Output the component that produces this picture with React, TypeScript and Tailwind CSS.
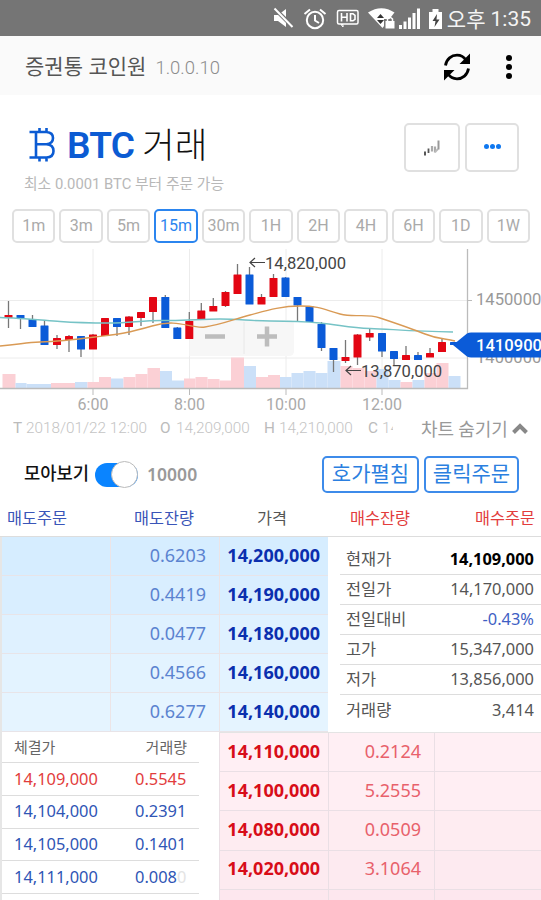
import { useState } from 'react';

const TIMEFRAMES = ['1m', '3m', '5m', '15m', '30m', '1H', '2H', '4H', '6H', '1D', '1W'] as const;

const ASKS = [
  { qty: '0.6203', price: '14,200,000', bg: 'bg-[#d6edff]' },
  { qty: '0.4419', price: '14,190,000', bg: 'bg-[#d9eeff]' },
  { qty: '0.0477', price: '14,180,000', bg: 'bg-[#dff1ff]' },
  { qty: '0.4566', price: '14,160,000', bg: 'bg-[#e3f3ff]' },
  { qty: '0.6277', price: '14,140,000', bg: 'bg-[#e5f4ff]' },
];

const BIDS = [
  { qty: '0.2124', price: '14,110,000', bg: 'bg-[#ffeff4]' },
  { qty: '5.2555', price: '14,100,000', bg: 'bg-[#ffeef3]' },
  { qty: '0.0509', price: '14,080,000', bg: 'bg-[#feecf1]' },
  { qty: '3.1064', price: '14,020,000', bg: 'bg-[#fdeaf0]' },
  { qty: '', price: '', bg: 'bg-[#fde7ee]' },
];

const SUMMARY = [
  { label: '현재가', value: '14,109,000', cls: 'font-bold text-black' },
  { label: '전일가', value: '14,170,000', cls: 'text-[#555]' },
  { label: '전일대비', value: '-0.43%', cls: 'text-[#3f5fc4]' },
  { label: '고가', value: '15,347,000', cls: 'text-[#555]' },
  { label: '저가', value: '13,856,000', cls: 'text-[#555]' },
  { label: '거래량', value: '3,414', cls: 'text-[#555]' },
];

const TRADES = [
  { price: '14,109,000', qty: '0.5545', rest: '', cls: 'text-[#e23c3c]' },
  { price: '14,104,000', qty: '0.2391', rest: '', cls: 'text-[#2f55b5]' },
  { price: '14,105,000', qty: '0.1401', rest: '', cls: 'text-[#2f55b5]' },
  { price: '14,111,000', qty: '0.008', rest: '0', cls: 'text-[#2f55b5]' },
];

// [x, body top, body bottom, wick top, wick bottom, up]
const CANDLES: [number, number, number, number, number, boolean][] = [
  [8.5, 67, 70, 53, 80, true],
  [20.5, 67, 71, 67, 81, false],
  [32.5, 71, 79, 67, 79, false],
  [44.5, 77.5, 97, 72, 97, false],
  [57, 90, 97, 87, 101, true],
  [69, 88, 92, 87, 104, true],
  [81, 88, 101.5, 88, 109, false],
  [93, 86.5, 101.5, 86, 101, true],
  [105, 70, 88, 70, 88, true],
  [117, 70, 79, 70, 88, false],
  [129, 68.5, 79, 68, 87, true],
  [141, 64, 70, 64, 78, true],
  [153, 49, 64, 49, 75, true],
  [165.3, 49, 80, 47, 80, false],
  [177.3, 79.5, 91, 79, 91, false],
  [189.3, 73, 91, 64, 91, true],
  [201.3, 62.5, 71.5, 55, 71, true],
  [213.3, 58, 63.5, 50, 63, true],
  [225.5, 44, 58, 43, 59, true],
  [237.5, 26.5, 46, 16, 46, true],
  [249.5, 26.5, 56.5, 19, 56, false],
  [261.5, 49, 56.5, 46, 56, true],
  [273.5, 30, 49, 26, 49, true],
  [285.5, 29.5, 49, 29, 49, false],
  [297.5, 49, 57.5, 49, 73, false],
  [309.5, 58, 74, 58, 74, false],
  [321.5, 76, 100, 74, 103, false],
  [333.5, 100, 112, 100, 124, false],
  [345.5, 109, 113, 92, 115, true],
  [357.5, 86.5, 109.5, 86, 117, true],
  [369.7, 85, 89.5, 81, 93, true],
  [382, 85, 103.5, 85, 109, false],
  [394, 103, 111, 103, 117, false],
  [406, 107, 112, 98, 112, true],
  [418, 107, 112, 104, 112, false],
  [430, 105, 109.5, 100, 109, true],
  [442, 94, 104, 91, 104, true],
  [454, 94, 97, 94, 97, false],
];

// [x, width, top, up]
const VOLUMES: [number, number, number, boolean][] = [
  [2.5, 13, 126, true], [15.5, 11, 135, false], [26.5, 24.5, 136, false], [51, 24, 135, true],
  [75, 12.5, 134, false], [87.5, 11.5, 134, true], [99, 12, 129, true], [111, 12.5, 130.5, false],
  [123.5, 12, 129, true], [135.5, 12, 126, true], [147.5, 12.5, 120, true], [160, 12, 123, false],
  [172, 12, 132.5, false], [184, 11.5, 130.5, true], [195.5, 12, 129, true], [207.5, 12, 131, true],
  [219.5, 11.5, 132.5, true], [231, 13, 109.5, true], [244, 12, 118, false], [256, 12, 129, true],
  [268, 12, 127, true], [280, 11.5, 129, false], [291.5, 12, 125, false], [303.5, 12, 123, false],
  [315.5, 12, 125, false], [327.5, 13, 113, false], [340.5, 12, 118, true], [352.5, 12, 120, true],
  [364.5, 12, 123, true], [376.5, 12, 121, false], [388.5, 12, 132, false], [400.5, 12, 134, true],
  [412.5, 12, 132, false], [424.5, 12, 125, true], [436.5, 12, 115, true], [448.5, 12, 128, false],
];

const GRID_X = [
  { x: 93, label: '6:00' },
  { x: 189.5, label: '8:00' },
  { x: 286, label: '10:00' },
  { x: 382, label: '12:00' },
];

function StatusBar() {
  return (
    <div className="h-9 bg-[#757575] flex items-center justify-end pr-2.5 text-white">
      <svg width="176" height="36" viewBox="0 0 176 36" fill="#fff">
        {/* muted speaker */}
        <path d="M3 15h4l8-6v18l-8-6H3z" />
        <path d="M2 7l21 21" stroke="#757575" strokeWidth="4" />
        <path d="M3.500 8.500L21.500 27" stroke="#fff" strokeWidth="2" />
        {/* alarm clock */}
        <g fill="none" stroke="#fff" strokeWidth="2">
          <circle cx="44" cy="20" r="8.200" />
          <path d="M44 15v5.500l4 2.500M33.500 14l5.500-4.500M54.500 14L49 9.500" />
        </g>
        {/* HD voice */}
        <g fill="none" stroke="#fff" transform="translate(-1 0)">
          <rect x="67.500" y="10.500" width="20.500" height="13.500" rx="1.500" strokeWidth="1.500" />
          <path d="M71.500 13v8.500M77 13v8.500M71.500 17.200h5.500M80.500 13.800h2.500l2 1.500v4l-2 1.500h-2.500z" strokeWidth="1.600" />
          <path d="M71 24.500l2 2.500v-2.500z" strokeWidth="1" />
        </g>
        {/* wifi with lock */}
        <path d="M97 12.500Q110.500 4 123.500 12.500L111.500 28z" />
        <path d="M106 18l3.500-4 3.500 4zM106 20l3.500 4 3.500-4z" fill="#333" />
        <path d="M113 19h12v10h-12z" fill="#757575" />
        <rect x="114.500" y="21" width="9" height="7.500" />
        <path d="M116.500 21v-2q2.500-3 5 0v2" fill="none" stroke="#fff" strokeWidth="1.500" />
        {/* signal */}
        <rect x="128" y="25" width="3" height="4" />
        <rect x="132.500" y="21.500" width="3" height="7.500" />
        <rect x="137" y="17.500" width="3" height="11.500" />
        <rect x="141.500" y="13" width="3" height="16" />
        <rect x="146" y="8.500" width="3" height="20.500" />
        {/* battery */}
        <path d="M158 12h3.500V9h6v3h3.500v17h-13z" />
        <path d="M166 14l-4.500 7h3l-1 6 5-7.500h-3z" fill="#444" />
      </svg>
      <span className="mt-0.5 text-[21px] leading-9 whitespace-nowrap text-[#f4f4f4]">오후</span>
      <span className="ml-[5px] mt-0.5 text-[21px] leading-9 text-[#f4f4f4] font-[Roboto]">1:35</span>
    </div>
  );
}

function AppBar() {
  return (
    <header className="h-[59px] bg-[#fafafa] flex items-center pl-[25px] pr-[29px]">
      <h1 className="mt-0.5 text-[21px] leading-none text-[#555]">증권통 코인원</h1>
      <span className="ml-[9px] mt-[6px] text-[18.500px] leading-none text-[#8c8c8c] font-[Roboto] font-light">1.0.0.10</span>
      <svg className="ml-auto mt-0.5" width="28" height="28" viewBox="0 0 28 28" fill="none" stroke="#000" strokeWidth="2.800">
        <path d="M2.500 12.500C3.500 6 8.500 2.200 14 2.200c4 0 7 1.800 9 5" />
        <path d="M25.500 15.500C24.500 22 19.500 25.800 14 25.800c-4 0-7-1.800-9-5" />
        <path d="M27 .5v10.500h-10.500zM1 27.500V17h10.500z" fill="#000" stroke="none" />
      </svg>
      <div className="ml-[35px] mt-0.5 flex flex-col gap-[3px]">
        <i className="size-1.5 rounded-full bg-black" />
        <i className="size-1.5 rounded-full bg-black" />
        <i className="size-1.5 rounded-full bg-black" />
      </div>
    </header>
  );
}

function CoinTitle() {
  return (
    <section className="h-[114px] pt-7 flex pl-6 pr-[22px]">
      <div>
        <div className="h-11 flex items-center">
          <svg className="ml-1" width="28" height="36" viewBox="0 0 28 36" fill="none" stroke="#0b5bd3" strokeWidth="2.600">
            <path d="M1.500 5H18.500q6.500 .5 6.500 6t-6.500 6.300H8M18.500 17.300q7 .5 7 6.700t-7 6.500H1.500M8 5v25.500M11.500 1v5M18.500 1v5M11.500 30v4.500M18.500 30v4.500" />
          </svg>
          <span className="ml-[11px] mt-px text-[37px] leading-none font-semibold tracking-[-0.8px] text-[#0b5bd3] font-[Roboto]">BTC</span>
          <span className="ml-2 text-[35.500px] leading-none text-[#111] font-light">거래</span>
        </div>
        <p className="mt-[7px] text-[14.800px] leading-5 text-[#b8b8b8] whitespace-nowrap font-[Roboto,'Noto_Sans_CJK_KR',sans-serif]">최소 0.0001 BTC 부터 주문 가능</p>
      </div>
      <div className="ml-auto flex gap-[5px]">
        <button className="w-14 h-[49px] rounded-[5px] border-2 border-[#e0e0e0] flex items-center justify-center">
          <svg width="18" height="16" viewBox="0 0 18 16" fill="none">
            <path d="M2 11.500v4" stroke="#444" strokeWidth="1.800" />
            <path d="M5.500 8.500v4.500" stroke="#555" strokeWidth="1.800" />
            <path d="M9 6v5.500M12 6.500v6" stroke="#aaa" strokeWidth="2.200" />
            <path d="M12 12l3-3" stroke="#bbb" strokeWidth="2" />
            <path d="M15.500 .5v9" stroke="#999" strokeWidth="2" />
          </svg>
        </button>
        <button className="w-[54px] h-[49px] rounded-[5px] border-2 border-[#e0e0e0] flex items-center justify-center gap-px">
          <i className="size-[5px] mb-0.5 rounded-full bg-[#0f78f0]" />
          <i className="size-[5px] mb-0.5 rounded-full bg-[#0f78f0]" />
          <i className="size-[5px] mb-0.5 rounded-full bg-[#0f78f0]" />
        </button>
      </div>
    </section>
  );
}

function PriceChart() {
  return (
    <svg className="block mt-[5px] font-[Roboto]" width="541" height="165" viewBox="0 0 541 165">
      <g stroke="#ececec" strokeWidth="1">
        {GRID_X.map(g => <path key={g.label} d={`M${g.x} 1V140`} />)}
        <path d="M0 52.500H467M0 110H467" />
      </g>
      <path d="M189.500 72H289q5 0 5 5V103q0 5-5 5H189.500z" fill="#f7f7f7" />
      <path d="M244 74v32" stroke="#e8e8e8" />
      <path d="M205 88.500h20M257 88.500h20M267 78.500v20" stroke="#bdbdbd" strokeWidth="4.500" />

      {VOLUMES.map(([x, w, top, up]) => (
        <rect key={x} x={x} y={top} width={w} height={140 - top} fill={up ? '#fbd0d5' : '#cbe0f8'} />
      ))}
      {CANDLES.map(([x, top, bottom, wickTop, wickBottom, up]) => (
        <g key={x}>
          <path d={`M${x} ${wickTop}V${wickBottom}`} stroke="#777" strokeWidth="1.300" />
          <rect x={x - 4} y={top} width="8" height={bottom - top} rx="0.500" fill={up ? '#e30613' : '#0b5bd8'} />
        </g>
      ))}

      <path
        d="M0 69.500C20 70 40 72 60 73.500S90 75 110 75S145 72 165 72.500S200 71 220 71S250 73 270 73S300 73 320 75S350 80 370 80.500S410 83.500 453 84"
        fill="none" stroke="#76c3c6" strokeWidth="1.400"
      />
      <path
        d="M0 98C20 96.500 25 94.500 40 94S75 91.500 95 89S125 86 152 78S190 81 205 79S235 71 250 67S280 58 300 58S325 62 340 66S365 65 380 70S410 80 425 86S445 90 455 93"
        fill="none" stroke="#d99a55" strokeWidth="1.400"
      />

      <path d="M0 140.500H467.500V1" fill="none" stroke="#bbb" strokeWidth="1.300" />
      <path d="M467 52.500h5" stroke="#bbb" />
      {GRID_X.map(g => (
        <g key={g.label}>
          <path d={`M${g.x} 141v6`} stroke="#bbb" />
          <text x={g.x} y="162" fontSize="16" textAnchor="middle" fill="#aaa">{g.label}</text>
        </g>
      ))}

      <path d="M265 14.500H250M255 10l-5 4.500 5 4.500M361 122.500H346M351 118l-5 4.500 5 4.500" fill="none" stroke="#444" strokeWidth="1.200" />
      <text x="265" y="20.500" fontSize="16.600" fill="#444">14,820,000</text>
      <text x="361" y="128.500" fontSize="16.600" fill="#444">13,870,000</text>

      <text x="476" y="57" fontSize="16.600" fill="#999">1450000</text>
      <text x="476" y="115" fontSize="16.600" fill="#999">1400000</text>
      <path d="M453 97L467 85.500Q469 84.500 471 84.500H541V109.500H471Q469 109.500 467 108.500z" fill="#0b5bd8" />
      <text x="476" y="103" fontSize="16.600" fontWeight="500" fill="#fff">1410900</text>
    </svg>
  );
}

function OhlcRow() {
  return (
    <div className="h-[32px] pb-[3px] flex items-center text-[15.300px] leading-none font-[Roboto] text-[#c4c4c4] pl-[13px] whitespace-nowrap">
      <div className="w-[380px] flex overflow-hidden leading-5">
        <b className="w-[13px] shrink-0 font-normal text-[#bbb]">T</b>
        <span className="w-[134px] shrink-0 font-light">2018/01/22 12:00</span>
        <b className="w-4 shrink-0 font-normal text-[#bbb]">O</b>
        <span className="w-[88px] shrink-0 font-light">14,209,000</span>
        <b className="w-[15px] shrink-0 font-normal text-[#bbb]">H</b>
        <span className="w-[89px] shrink-0 font-light">14,210,000</span>
        <b className="w-[14px] shrink-0 font-normal text-[#bbb]">C</b>
        <span className="font-light">14</span>
      </div>
      <span className="ml-7 text-[18px] text-[#999] font-['Noto_Sans_CJK_KR',sans-serif]">차트 숨기기</span>
      <svg className="ml-[4px]" width="16" height="12" viewBox="0 0 16 12" fill="none" stroke="#888" strokeWidth="4">
        <path d="M1.500 10.500L8 4l6.500 6.500" />
      </svg>
    </div>
  );
}

export default function App() {
  const [timeframe, setTimeframe] = useState('15m');
  const [grouped, setGrouped] = useState(true);

  return (
    <div className="w-[541px] h-[900px] overflow-hidden bg-white flex flex-col font-['Noto_Sans','Noto_Sans_CJK_KR',sans-serif]">
      <StatusBar />
      <AppBar />
      <CoinTitle />

      <div className="h-[34px] flex gap-1 pl-[12px] pr-[11px]">
        {TIMEFRAMES.map(tf => (
          <button
            key={tf}
            onClick={() => setTimeframe(tf)}
            className={`flex-1 basis-0 min-w-0 rounded-[5px] border-2 text-[16px] leading-none font-[Roboto] ${
              tf === timeframe ? 'border-[#2b85ef] text-[#2b85ef]' : 'border-[#e0e0e0] text-[#aaa]'
            }`}
          >
            {tf}
          </button>
        ))}
      </div>

      <PriceChart />
      <OhlcRow />

      {/* Price grouping and order options */}
      <div className="h-[58px] flex items-center pl-6 pr-[22px]">
        <span className="text-[17.700px] leading-none font-medium text-[#111]">모아보기</span>
        <button
          onClick={() => setGrouped(!grouped)}
          className={`ml-1.5 mt-px w-[43px] h-6 rounded-full flex items-center ${grouped ? 'bg-[#0a84ff] justify-end' : 'bg-[#ddd]'}`}
        >
          <i className="size-[27px] shrink-0 rounded-full bg-white border border-[#bbb]" />
        </button>
        <span className="ml-[9px] mt-px text-[17.500px] leading-none font-semibold text-[#999]">10000</span>
        <div className="ml-auto flex gap-[5px] text-[21px] leading-none text-[#2b7fe0]">
          <button className="w-[97px] h-[37px] rounded-[5px] border-2 border-[#3d8bea] pb-0.5">호가펼침</button>
          <button className="w-[95px] h-[37px] rounded-[5px] border-2 border-[#3d8bea] pb-0.5">클릭주문</button>
        </div>
      </div>

      {/* Order book */}
      <div className="h-[34px] flex shrink-0 items-center text-[16.300px] leading-none pb-0.5 pl-[7px] pr-[6px] border-b border-[#ddd]">
        <span className="w-[127px] text-[#3a55b8]">매도주문</span>
        <span className="w-[123px] text-[#3a55b8]">매도잔량</span>
        <span className="w-[93px] text-[#555]">가격</span>
        <span className="text-[#e23c3c]">매수잔량</span>
        <span className="ml-auto text-[#e23c3c]">매수주문</span>
      </div>

      <div className="h-[195px] shrink-0 flex">
        <div className="w-[328px] border-l-2 border-[#e6e6e6] flex flex-col">
          {ASKS.map(row => (
            <div key={row.price} className={`flex-1 flex items-center text-[18px] leading-none border-b border-[#e8e4e8] ${row.bg}`}>
              <div className="w-[108px] h-full" />
              <div className="w-[110px] h-full border-x border-[#ece4e6] pr-[13px] pb-0.5 flex items-center justify-end text-[#5b83d0]">{row.qty}</div>
              <div className="flex-1 pr-2 pb-0.5 text-right font-bold text-[#0b2fae]">{row.price}</div>
            </div>
          ))}
        </div>
        <div className="flex-1 pl-3 pt-2">
          {SUMMARY.map(item => (
            <div key={item.label} className="h-[30px] flex items-center justify-between pl-[6px] pr-[7px] text-[16.400px] leading-none border-b border-[#ddd] last:border-0">
              <span className="text-[#555]">{item.label}</span>
              <span className={item.cls}>{item.value}</span>
            </div>
          ))}
        </div>
      </div>

      <div className="h-[168px] shrink-0 flex">
        <div className="w-[219px] border-l-2 border-[#e6e6e6]">
          <div className="w-[197px] h-[31px] flex items-center justify-between pl-3 pr-3 text-[15px] leading-none text-[#666] border-b border-[#ddd]">
            <span>체결가</span>
            <span>거래량</span>
          </div>
          {TRADES.map(t => (
            <div key={t.price} className={`w-[197px] h-[32.800px] flex items-center pl-3 text-[16.400px] leading-none border-b border-[#ddd] ${t.cls}`}>
              <span className="w-[121px]">{t.price}</span>
              <span>{t.qty}<span className="text-[#e4e4e4]">{t.rest}</span></span>
            </div>
          ))}
        </div>
        <div className="flex-1 border-t border-[#e4e4e4]">
          {BIDS.map(row => (
            <div key={row.qty} className={`h-[39.200px] flex items-center text-[18px] leading-none border-b border-[#eadfe5] ${row.bg}`}>
              <div className="w-[110px] h-full border-x border-[#eadfe5] pr-2 pb-[3px] flex items-center justify-end font-bold text-[#d80d18]">{row.price}</div>
              <div className="w-[106px] h-full border-r border-[#eadfe5] pr-[13px] pb-[3px] flex items-center justify-end text-[#e8616b]">{row.qty}</div>
            </div>
          ))}
        </div>
      </div>
    </div>
  );
}
